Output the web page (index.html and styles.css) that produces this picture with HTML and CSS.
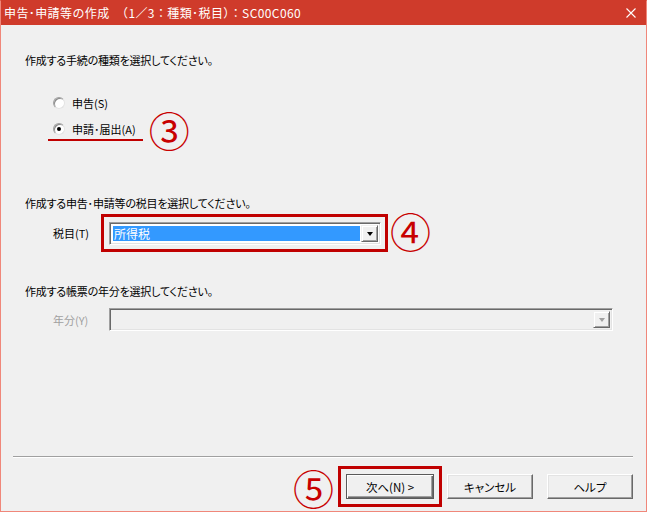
FILE: index.html
```html
<!DOCTYPE html>
<html lang="ja">
<head>
<meta charset="utf-8">
<title>申告･申請等の作成</title>
<link rel="stylesheet" href="styles.css">
</head>
<body>
<div class="window">
  <div class="titlebar">
    <span class="title">申告･申請等の作成　（1／3：種類･税目）：SC00C060</span>
    <svg class="close" viewBox="0 0 10 10" width="10" height="10"><path d="M0.5 0.5 L9.5 9.5 M9.5 0.5 L0.5 9.5" stroke="#fff" stroke-width="1.1" fill="none"/></svg>
  </div>
  <div class="content">
    <p class="heading h-first">作成する手続の種類を選択してください。</p>
    <div class="radios">
      <div class="radio-row"><span class="radio"></span><span class="label">申告(S)</span></div>
      <div class="radio-row radio-row--marked"><span class="radio radio--checked"></span><span class="label">申請･届出(A)</span><span class="mark mark--3">③</span></div>
    </div>
    <p class="heading h-second">作成する申告･申請等の税目を選択してください。</p>
    <div class="field-row">
      <span class="field-label">税目(T)</span>
      <div class="hl-box hl-box--combo">
        <div class="combo combo--tax">
          <span class="combo-value">所得税</span>
          <span class="combo-btn"><span class="arrow"></span></span>
        </div>
      </div>
      <span class="mark mark--4">④</span>
    </div>
    <p class="heading h-third">作成する帳票の年分を選択してください。</p>
    <div class="field-row field-row--disabled">
      <span class="field-label field-label--wide">年分(Y)</span>
      <div class="combo combo--year combo--disabled">
        <span class="combo-value"></span>
        <span class="combo-btn"><span class="arrow"></span></span>
      </div>
    </div>
  </div>
  <div class="footer">
    <div class="separator"></div>
    <div class="buttons">
      <span class="mark mark--5">⑤</span>
      <div class="hl-box hl-box--btn"><button class="btn btn--default btn--next">次へ(N) &gt;</button></div>
      <button class="btn">キャンセル</button>
      <button class="btn">ヘルプ</button>
    </div>
  </div>
</div>
</body>
</html>
```
FILE: styles.css
```css
body {
  margin: 0;
  background: #f0f0f0;
}

.window {
  width: 647px;
  height: 512px;
  box-sizing: border-box;
  border: 1px solid #f0877a;
  border-top-color: #cf3b2b;
  display: flex;
  flex-direction: column;
  background: #f0f0f0;
  font-family: "Noto Sans CJK JP", sans-serif;
  font-size: 11px;
  color: #000;
}

.titlebar {
  flex: none;
  height: 24px;
  background: #cf3b2b;
  color: #fff;
  display: flex;
  align-items: center;
  justify-content: space-between;
  padding: 0 10px 0 3px;
}

.title {
  font-size: 12px;
  line-height: 16px;
  letter-spacing: 0.4px;
  white-space: pre;
}

.close {
  display: block;
}

.content {
  flex: 1;
  padding-left: 24px;
}

.heading {
  margin: 0;
  line-height: 16px;
  letter-spacing: -0.2px;
  font-feature-settings: "palt";
}

.h-first { margin-top: 27px; }
.h-second { margin-top: 53px; }
.h-third { margin-top: 31px; }

.radios {
  margin: 22px 0 0 28px;
}

.radio-row {
  height: 26px;
  display: flex;
  align-items: center;
  position: relative;
}

.label {
  line-height: 16px;
  font-feature-settings: "palt";
}

.radio {
  width: 12px;
  height: 12px;
  box-sizing: border-box;
  border-radius: 50%;
  border: 1px solid #a0a0a0;
  border-right-color: #e3e3e3;
  border-bottom-color: #e3e3e3;
  background: #fff;
  box-shadow: inset 1px 1px 0 #8a8a8a;
  margin-right: 7px;
  position: relative;
}

.radio--checked::after {
  content: "";
  position: absolute;
  left: 3px;
  top: 3px;
  width: 4px;
  height: 4px;
  border-radius: 50%;
  background: #000;
}

.radio-row--marked::after {
  content: "";
  position: absolute;
  left: -5px;
  top: 23px;
  width: 95px;
  height: 2px;
  background: #c00000;
}

.mark {
  display: block;
  height: 40px;
  font-family: "Noto Sans CJK JP", sans-serif;
  font-size: 41px;
  line-height: 40px;
  color: #c80000;
  flex: none;
}

.mark--3 {
  margin: -12px 0 -12px 13px;
}

.mark--4 {
  margin: -8px 0 -2px 2px;
}

.mark--5 {
  margin: 0 4px 0 0;
}

.field-row {
  display: flex;
  align-items: center;
  margin: 3px 0 0 28px;
}

.field-row--disabled {
  margin-top: 9px;
  color: #a0a0a0;
}

.field-label {
  width: 48px;
  line-height: 16px;
  font-feature-settings: "palt";
  flex: none;
}

.field-label--wide {
  width: 56px;
}

.hl-box {
  border: 3px solid #c00000;
  flex: none;
}

.hl-box--combo {
  padding: 5px 4px 4px 5px;
}

.combo {
  display: flex;
  height: 23px;
  box-sizing: border-box;
  border: 1px solid #a0a0a0;
  border-right-color: #fff;
  border-bottom-color: #fff;
  box-shadow: inset 1px 1px 0 #696969, inset -1px -1px 0 #e3e3e3;
  background: #fff;
  padding: 2px;
}

.combo--tax {
  width: 272px;
}

.combo--year {
  width: 504px;
}

.combo--disabled {
  background: #f0f0f0;
}

.combo-value {
  flex: 1;
  margin: 1px;
  background: #3399ff;
  color: #fff;
  padding-left: 1px;
  font-size: 12px;
  line-height: 15px;
  font-feature-settings: "palt";
}

.combo--disabled .combo-value {
  background: transparent;
}

.combo-btn {
  width: 17px;
  box-sizing: border-box;
  background: #f0f0f0;
  border: 1px solid #f0f0f0;
  border-right-color: #696969;
  border-bottom-color: #696969;
  box-shadow: inset 1px 1px 0 #fff, inset -1px -1px 0 #a0a0a0;
  display: flex;
  align-items: center;
  justify-content: center;
}

.arrow {
  width: 0;
  height: 0;
  border-top: 4px solid #000;
  border-left: 3px solid transparent;
  border-right: 3px solid transparent;
}

.combo--disabled .arrow {
  border-top-color: #a0a0a0;
}

.footer {
  flex: none;
  padding: 0 13px 4px 12px;
}

.separator {
  border-top: 1px solid #a0a0a0;
  border-bottom: 1px solid #fff;
}

.buttons {
  margin-top: 8px;
  display: flex;
  align-items: center;
  justify-content: flex-end;
}

.hl-box--btn {
  padding: 5px 5px;
  margin-right: 5px;
}

.btn {
  display: block;
  width: 86px;
  height: 25px;
  box-sizing: border-box;
  margin: 0;
  padding: 0;
  font-family: "Noto Sans CJK JP", sans-serif;
  font-size: 11.5px;
  font-feature-settings: "palt";
  color: #000;
  background: #f0f0f0;
  border: 1px solid #fff;
  border-right-color: #696969;
  border-bottom-color: #696969;
  box-shadow: inset -1px -1px 0 #a0a0a0, inset 1px 1px 0 #e3e3e3;
}

.btn + .btn {
  margin-left: 14px;
}

.btn--next {
  width: 88px;
}

.btn--default {
  border: 1px solid #5a5a5a;
  box-shadow: inset 1px 1px 0 #fff, inset -1px -1px 0 #696969, inset -2px -2px 0 #a0a0a0;
}
```
